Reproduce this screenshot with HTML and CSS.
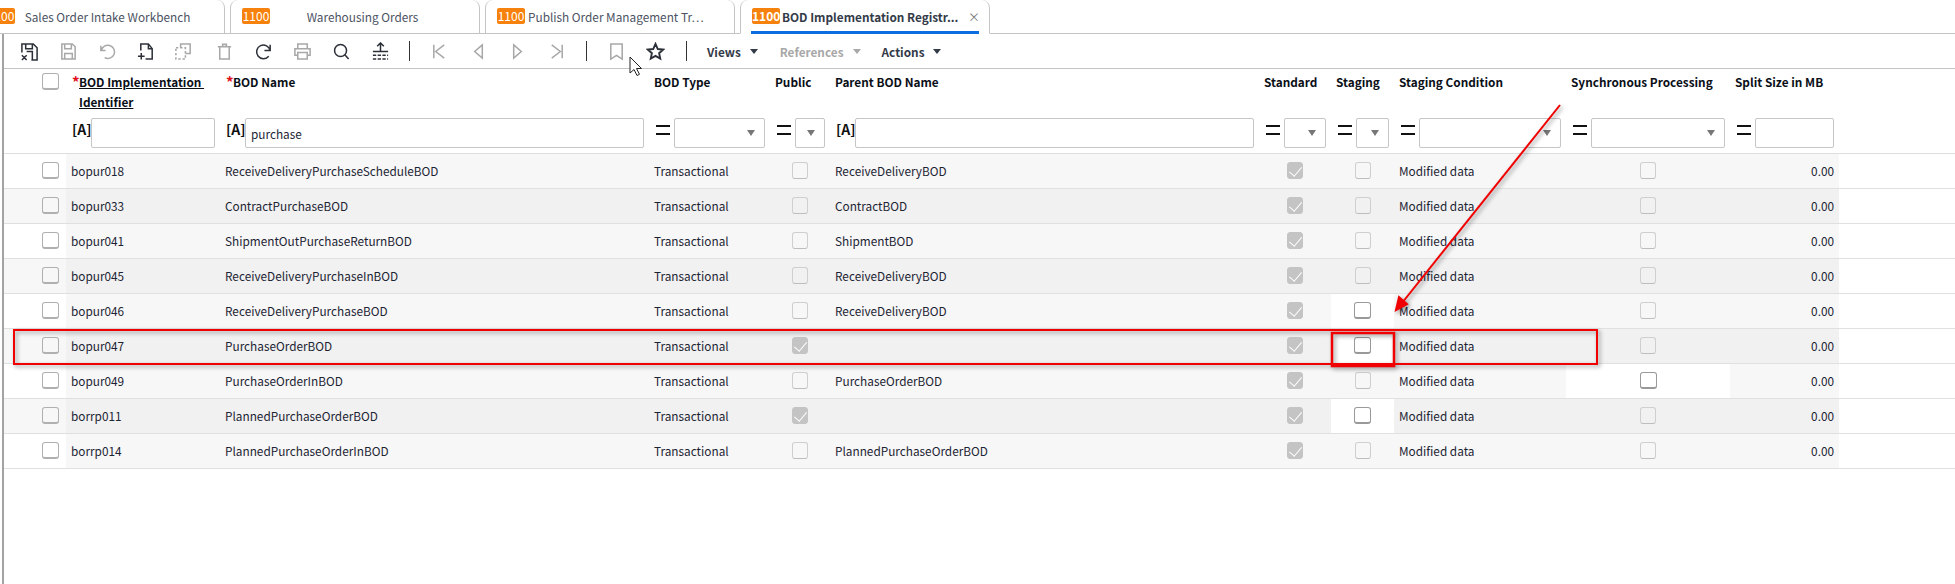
FILE: index.html
```html
<!DOCTYPE html>
<html lang="en">
<head>
  <meta charset="UTF-8" />
  <title>BOD Implementation Registry</title>
  <link rel="stylesheet" href="styles.css">
</head>
<body>

  <div class="tabs">
    <div class="tab first"><span class="badge">1100</span><span class="tab-text">Sales Order Intake Workbench</span></div>
    <div class="tab"><span class="badge">1100</span><span class="tab-text">Warehousing Orders</span></div>
    <div class="tab"><span class="badge">1100</span><span class="tab-text">Publish Order Management Tr…</span></div>
    <div class="tab active"><span class="badge">1100</span><span class="tab-text">BOD Implementation Registr...</span><span class="tab-close">×</span></div>
  </div>

  <div class="main">
    <div class="toolbar">
      <span class="tool"><svg viewBox="0 0 20 20"><path d="M2 11V2h12l4 4v13h-6M6 2v5h7V2M7 10h6v9M2 14l5 5M7 14l-5 5"/></svg></span>
      <span class="tool off"><svg viewBox="0 0 20 20"><path d="M3 2h11l3 3v13H3zM6 2v5h7V2M6 18v-6h8v6"/></svg></span>
      <span class="tool off"><svg viewBox="0 0 20 20"><path d="M3 4v5h5M3.5 9A7 7 0 1 1 7 16.5"/></svg></span>
      <span class="tool"><svg viewBox="0 0 20 20"><path d="M4 9V2h8l4 5v11H9M12 2v5h4M1 15h7M4.5 11.5v7"/></svg></span>
      <span class="tool off shift"><svg viewBox="0 0 20 20"><path d="M2 6h10v12H2z" stroke-dasharray="2.5 2"/><path d="M7 6V2h10v10h-5"/></svg></span>
      <span class="tool off"><svg viewBox="0 0 20 20"><path d="M3 5h14M8 5V2.5h4V5M5 5v13h10V5"/></svg></span>
      <span class="tool"><svg viewBox="0 0 20 20"><path d="M17 3v6h-6M17 9a7.2 7.2 0 1 0-1.500 6"/></svg></span>
      <span class="tool off"><svg viewBox="0 0 20 20"><path d="M5 7V2h10v5M5 14H2V7h16v7h-3M5 11h10v7H5z"/></svg></span>
      <span class="tool"><svg viewBox="0 0 20 20"><circle cx="9" cy="9" r="6.300"/><path d="M13.500 13.500l4 4.500"/></svg></span>
      <span class="tool"><svg viewBox="0 0 20 20"><path d="M10 1v9M6.500 4.500L10 1l3.500 3.500M2 10h16"/><path d="M2 14h16M2 18h16" stroke-dasharray="3.500 1.500"/></svg></span>
      <span class="sep"></span>
      <span class="tool off"><svg viewBox="0 0 20 20"><path d="M4 3v14M15 3l-9 7 9 7"/></svg></span>
      <span class="tool off"><svg viewBox="0 0 20 20"><path d="M14 3L6 10l8 7z"/></svg></span>
      <span class="tool off"><svg viewBox="0 0 20 20"><path d="M6 3l8 7-8 7z"/></svg></span>
      <span class="tool off"><svg viewBox="0 0 20 20"><path d="M16 3v14M5 3l9 7-9 7"/></svg></span>
      <span class="sep nav-end"></span>
      <span class="tool off"><svg viewBox="0 0 20 20"><path d="M4 2h12v16l-6-4-6 4z"/></svg></span>
      <span class="tool"><svg class="heavy" viewBox="0 0 20 20"><path d="M10 2l2.400 5.400 5.600.6-4.200 3.800 1.200 5.700L10 14.600l-5 2.900 1.200-5.700L2 8l5.600-.6z"/></svg></span>
      <span class="sep star-end"></span>
      <span class="menu">Views<i class="menu-caret"></i></span>
      <span class="menu off">References<i class="menu-caret"></i></span>
      <span class="menu">Actions<i class="menu-caret"></i></span>
    </div>

    <div class="grid head">
      <div class="col"><div class="col-title"><span class="box plain head-box"></span></div></div>
      <div class="col">
        <div class="col-title"><span class="req">*</span><u>BOD Implementation&nbsp;<br>Identifier</u></div>
        <div class="filter"><span class="op-a">[A]</span><input class="field" type="text"></div>
      </div>
      <div class="col">
        <div class="col-title"><span class="req">*</span><span>BOD Name</span></div>
        <div class="filter"><span class="op-a">[A]</span><input class="field" type="text" value="purchase"></div>
      </div>
      <div class="col">
        <div class="col-title">BOD Type</div>
        <div class="filter"><span class="op-eq"></span><div class="field pick"></div></div>
      </div>
      <div class="col">
        <div class="col-title">Public</div>
        <div class="filter"><span class="op-eq"></span><div class="field pick"></div></div>
      </div>
      <div class="col">
        <div class="col-title">Parent BOD Name</div>
        <div class="filter"><span class="op-a">[A]</span><input class="field" type="text"></div>
      </div>
      <div class="col">
        <div class="col-title">Standard</div>
        <div class="filter"><span class="op-eq"></span><div class="field pick"></div></div>
      </div>
      <div class="col">
        <div class="col-title">Staging</div>
        <div class="filter"><span class="op-eq"></span><div class="field pick"></div></div>
      </div>
      <div class="col">
        <div class="col-title">Staging Condition</div>
        <div class="filter"><span class="op-eq"></span><div class="field pick"></div></div>
      </div>
      <div class="col">
        <div class="col-title">Synchronous Processing</div>
        <div class="filter"><span class="op-eq"></span><div class="field pick"></div></div>
      </div>
      <div class="col">
        <div class="col-title">Split Size in MB</div>
        <div class="filter"><span class="op-eq"></span><input class="field" type="text"></div>
      </div>
    </div>

    <div class="grid row">
      <div class="cell sel"><span class="box plain"></span></div>
      <div class="cell">bopur018</div><div class="cell">ReceiveDeliveryPurchaseScheduleBOD</div><div class="cell">Transactional</div>
      <div class="cell mid"><span class="box"></span></div><div class="cell">ReceiveDeliveryBOD</div>
      <div class="cell mid"><span class="box on"></span></div><div class="cell mid"><span class="box"></span></div>
      <div class="cell">Modified data</div><div class="cell mid"><span class="box"></span></div><div class="cell num">0.00</div>
    </div>
    <div class="grid row">
      <div class="cell sel"><span class="box plain"></span></div>
      <div class="cell">bopur033</div><div class="cell">ContractPurchaseBOD</div><div class="cell">Transactional</div>
      <div class="cell mid"><span class="box"></span></div><div class="cell">ContractBOD</div>
      <div class="cell mid"><span class="box on"></span></div><div class="cell mid"><span class="box"></span></div>
      <div class="cell">Modified data</div><div class="cell mid"><span class="box"></span></div><div class="cell num">0.00</div>
    </div>
    <div class="grid row">
      <div class="cell sel"><span class="box plain"></span></div>
      <div class="cell">bopur041</div><div class="cell">ShipmentOutPurchaseReturnBOD</div><div class="cell">Transactional</div>
      <div class="cell mid"><span class="box"></span></div><div class="cell">ShipmentBOD</div>
      <div class="cell mid"><span class="box on"></span></div><div class="cell mid"><span class="box"></span></div>
      <div class="cell">Modified data</div><div class="cell mid"><span class="box"></span></div><div class="cell num">0.00</div>
    </div>
    <div class="grid row">
      <div class="cell sel"><span class="box plain"></span></div>
      <div class="cell">bopur045</div><div class="cell">ReceiveDeliveryPurchaseInBOD</div><div class="cell">Transactional</div>
      <div class="cell mid"><span class="box"></span></div><div class="cell">ReceiveDeliveryBOD</div>
      <div class="cell mid"><span class="box on"></span></div><div class="cell mid"><span class="box"></span></div>
      <div class="cell">Modified data</div><div class="cell mid"><span class="box"></span></div><div class="cell num">0.00</div>
    </div>
    <div class="grid row">
      <div class="cell sel"><span class="box plain"></span></div>
      <div class="cell">bopur046</div><div class="cell">ReceiveDeliveryPurchaseBOD</div><div class="cell">Transactional</div>
      <div class="cell mid"><span class="box"></span></div><div class="cell">ReceiveDeliveryBOD</div>
      <div class="cell mid"><span class="box on"></span></div><div class="cell mid edit"><span class="box live"></span></div>
      <div class="cell">Modified data</div><div class="cell mid"><span class="box"></span></div><div class="cell num">0.00</div>
    </div>
    <div class="grid row">
      <div class="cell sel"><span class="box plain"></span></div>
      <div class="cell">bopur047</div><div class="cell">PurchaseOrderBOD</div><div class="cell">Transactional</div>
      <div class="cell mid"><span class="box on"></span></div><div class="cell"></div>
      <div class="cell mid"><span class="box on"></span></div><div class="cell mid edit"><span class="box live"></span></div>
      <div class="cell">Modified data</div><div class="cell mid"><span class="box"></span></div><div class="cell num">0.00</div>
    </div>
    <div class="grid row">
      <div class="cell sel"><span class="box plain"></span></div>
      <div class="cell">bopur049</div><div class="cell">PurchaseOrderInBOD</div><div class="cell">Transactional</div>
      <div class="cell mid"><span class="box"></span></div><div class="cell">PurchaseOrderBOD</div>
      <div class="cell mid"><span class="box on"></span></div><div class="cell mid"><span class="box"></span></div>
      <div class="cell">Modified data</div><div class="cell mid edit"><span class="box live"></span></div><div class="cell num">0.00</div>
    </div>
    <div class="grid row">
      <div class="cell sel"><span class="box plain"></span></div>
      <div class="cell">borrp011</div><div class="cell">PlannedPurchaseOrderBOD</div><div class="cell">Transactional</div>
      <div class="cell mid"><span class="box on"></span></div><div class="cell"></div>
      <div class="cell mid"><span class="box on"></span></div><div class="cell mid edit"><span class="box live"></span></div>
      <div class="cell">Modified data</div><div class="cell mid"><span class="box"></span></div><div class="cell num">0.00</div>
    </div>
    <div class="grid row">
      <div class="cell sel"><span class="box plain"></span></div>
      <div class="cell">borrp014</div><div class="cell">PlannedPurchaseOrderInBOD</div><div class="cell">Transactional</div>
      <div class="cell mid"><span class="box"></span></div><div class="cell">PlannedPurchaseOrderBOD</div>
      <div class="cell mid"><span class="box on"></span></div><div class="cell mid"><span class="box"></span></div>
      <div class="cell">Modified data</div><div class="cell mid"><span class="box"></span></div><div class="cell num">0.00</div>
    </div>
  </div>

  <svg class="markup" viewBox="0 0 1955 584">
    <g class="marks">
      <rect x="14" y="330" width="1583" height="34"/>
      <rect class="thick" x="1332" y="333" width="62" height="33"/>
      <path d="M1560 105L1402 303"/>
      <path class="head-fill" d="M1396 310L1399 297L1407 304z"/>
    </g>
    <path class="pointer" d="M630 57v16l4-3.500 3 6 2.500-1.200-3-5.800h5z"/>
  </svg>

</body>
</html>
```

FILE: styles.css
```css
* {
  box-sizing: border-box;
}

html, body {
  margin: 0;
  height: 584px;
  overflow: hidden;
  background: #fff;
}

body {
  position: relative;
  font-family: "Noto Sans CJK SC", "Noto Sans", sans-serif;
  font-size: 11.8px;
  color: #1c2433;
}

/* tabs */
.tabs {
  display: flex;
  gap: 5px;
  height: 34px;
  margin-left: -25px;
  border-bottom: 1px solid #c4c4c4;
}

.tab {
  display: flex;
  align-items: center;
  flex: 0 0 250px;
  min-width: 0;
  height: 34px;
  padding: 0 10px 1px 11px;
  border: 1px solid #c4c4c4;
  border-top: none;
  border-bottom: 1px solid #c4c4c4;
  border-radius: 8px 8px 0 0;
  background: #fff;
  color: #4b5262;
}

.badge {
  flex: none;
  width: 28px;
  height: 16px;
  border-radius: 2px;
  background: #f6820d;
  color: #fff;
  font-size: 12px;
  line-height: 16px;
  text-align: center;
}

.tab-text {
  flex: 1;
  padding-right: 14px;
  text-align: center;
  white-space: nowrap;
}

.tab:nth-child(3) .tab-text {
  padding: 0 0 0 3px;
  text-align: left;
}

.tab.active {
  position: relative;
  border-bottom-color: #fff;
  color: #333a48;
  font-weight: 700;
}

.tab.active::after {
  content: "";
  position: absolute;
  left: 10px;
  right: 10px;
  bottom: -1px;
  height: 3px;
  background: #0a6ee0;
}

.tab.active .tab-text {
  padding: 0 0 0 2px;
  text-align: left;
}

.tab-close {
  flex: none;
  width: 20px;
  margin-right: -5px;
  color: #777;
  font-size: 12px;
  font-weight: 400;
  text-align: center;
}

/* everything under the tabs */
.main {
  height: 550px;
  margin-left: 2px;
  border-left: 2px solid #a3a3a3;
}

/* toolbar */
.toolbar {
  display: flex;
  align-items: center;
  height: 35px;
  padding-left: 6px;
  border-bottom: 1px solid #c4c4c4;
}

.tool {
  display: flex;
  align-items: center;
  justify-content: center;
  flex: 0 0 39px;
  color: #2c3038;
}

.tool.off {
  color: #a8a8a8;
}

.tool.shift svg {
  margin-left: -5px;
}

.tool svg {
  width: 19px;
  height: 19px;
  fill: none;
  stroke: currentColor;
  stroke-width: 1.6;
}

.tool svg.heavy {
  stroke-width: 2;
}

.sep {
  flex: none;
  width: 1px;
  height: 20px;
  margin: 0 10px 0 9px;
  background: #333;
}

.sep.nav-end {
  margin: 0 10px 0 10px;
}

.sep.star-end {
  margin: 0 20px 0 11px;
}

.menu {
  display: flex;
  align-items: center;
  margin-right: 22px;
  color: #333a48;
  font-weight: 700;
}

.menu.off {
  margin-right: 21px;
  color: #a8a8a8;
}

.menu-caret {
  width: 0;
  height: 0;
  margin-left: 9px;
  border-top: 5px solid currentColor;
  border-left: 4px solid transparent;
  border-right: 4px solid transparent;
}

/* table */
.grid {
  display: grid;
  grid-template-columns: 62px 154px 429px 121px 60px 429px 72px 63px 172px 164px 109px;
}

.head {
  height: 85px;
  border-bottom: 1px solid #dedede;
}

.col {
  padding: 3px 5px 0;
  min-width: 0;
}

.col-title {
  display: flex;
  height: 46px;
  color: #0b0f18;
  font-weight: 700;
  line-height: 20px;
  white-space: nowrap;
}

.req {
  flex: none;
  width: 8px;
  padding-left: 1px;
  color: #e0101c;
  font-size: 15px;
}

.head-box {
  margin: 1px 0 0 33px;
}

.filter {
  display: flex;
  align-items: flex-start;
  height: 30px;
}

.op-a {
  flex: none;
  width: 20px;
  margin-top: 1px;
  padding-left: 1px;
  color: #111;
  font-size: 14px;
  font-weight: 700;
  line-height: 20px;
}

.op-eq {
  flex: none;
  width: 14px;
  height: 10px;
  margin: 7px 4px 0 2px;
  border-top: 2px solid #111;
  border-bottom: 2px solid #111;
}

.field {
  flex: 1;
  min-width: 0;
  height: 30px;
  padding: 0 5px;
  border: 1px solid #c6c6c6;
  border-radius: 2px;
  background: #fff;
  color: #1c2433;
  font: inherit;
  outline: none;
}

.pick {
  display: flex;
  align-items: center;
  justify-content: flex-end;
  padding-right: 9px;
}

.pick::after {
  content: "";
  border-top: 6px solid #777;
  border-left: 4px solid transparent;
  border-right: 4px solid transparent;
}

.row {
  height: 35px;
  border-bottom: 1px solid #e0e0e0;
}

.cell {
  display: flex;
  align-items: center;
  height: 34px;
  padding: 0 5px 1px;
  background: #f7f7f7;
  white-space: nowrap;
}

.row:nth-child(even) .cell {
  background: #f1f1f1;
}

.row:nth-child(odd) .cell.sel {
  background: #fff;
}

.row:nth-child(even) .cell.sel {
  background: #f7f7f7;
}

.row .cell.edit,
.row:nth-child(even) .cell.edit {
  background: #fff;
}

.cell.sel {
  padding-left: 38px;
}

.cell.mid {
  justify-content: center;
}

.cell.num {
  justify-content: flex-end;
}

.box {
  display: block;
  flex: none;
  width: 16px;
  height: 17px;
  border: 1px solid #cfcfcf;
  border-bottom-color: #bdbdbd;
  border-radius: 3px;
}

.box.plain {
  width: 17px;
  border-color: #b0b0b0;
  border-bottom-width: 2px;
}

.box.live {
  width: 17px;
  border-color: #999;
  border-bottom-width: 2px;
  background: #fff;
}

.box.on {
  position: relative;
  border-color: #c4c4c4;
  background: #c4c4c4;
}

.box.on::after {
  content: "";
  position: absolute;
  left: 4px;
  top: 1px;
  width: 6px;
  height: 11px;
  border: solid #fff;
  border-width: 0 1.5px 1.5px 0;
  transform: rotate(40deg);
}

/* red annotations pasted over the screenshot */
.markup {
  position: absolute;
  left: 0;
  top: 0;
  width: 1955px;
  height: 584px;
  pointer-events: none;
}

.marks {
  fill: none;
  stroke: #f00000;
  stroke-width: 2;
  filter: drop-shadow(2px 2px 2px rgba(0, 0, 0, 0.4));
}

.marks .thick {
  stroke-width: 2.5;
}

.marks .head-fill {
  fill: #f00000;
}

.pointer {
  fill: #fff;
  stroke: #222;
  stroke-width: 1;
}
```
